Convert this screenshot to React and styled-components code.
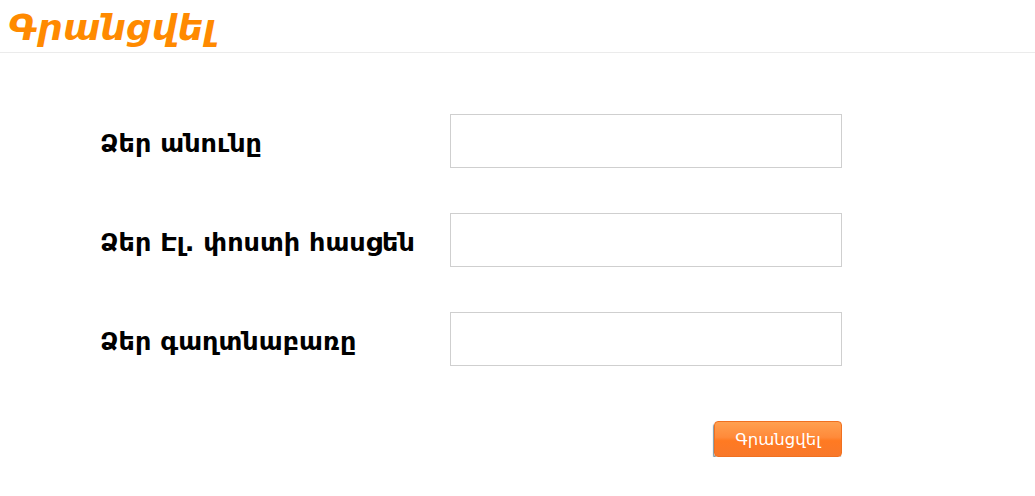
import styled, { createGlobalStyle } from "styled-components";

const GlobalStyle = createGlobalStyle`
  body {
    margin: 0;
    background: #fff;
    font-family: "DejaVu Sans", sans-serif;
  }
`;

const Header = styled.header`
  height: 52px;
  border-bottom: 1px solid #ebebeb;
  padding-left: 8px;
  display: flex;
  align-items: flex-end;
`;

const Title = styled.h1`
  margin: 0;
  font-size: 36px;
  font-weight: bold;
  font-style: italic;
  color: #ff8a00;
  line-height: 48px;
`;

const Form = styled.form`
  width: 742px;
  padding: 61px 0 0 100px;
  display: flex;
  flex-direction: column;
  gap: 45px;
`;

const Row = styled.div`
  display: flex;
  align-items: center;
`;

const Label = styled.label`
  width: 350px;
  font-size: 25.5px;
  font-weight: bold;
  color: #000;
  padding-top: 3px;
`;

const Input = styled.input`
  box-sizing: border-box;
  width: 392px;
  height: 54px;
  border: 1px solid #cfcfcf;
  outline: none;
  padding: 0 10px;
  font-size: 16px;
`;

const Actions = styled.div`
  display: flex;
  justify-content: flex-end;
  padding-top: 10px;
`;

const Button = styled.button`
  width: 128px;
  height: 36px;
  border: 1px solid #f07020;
  border-radius: 4px;
  background: linear-gradient(#ffa050, #ff8a3a 45%, #ff7a22 55%, #f8782a);
  box-shadow: -1px 2px 1px #7f9aa6;
  color: #fff;
  font-family: "DejaVu Sans", sans-serif;
  font-size: 16.5px;
  cursor: pointer;
`;

const fields = [
  { id: "name", label: "Ձեր անունը", type: "text" },
  { id: "email", label: "Ձեր Էլ. փոստի հասցեն", type: "email" },
  { id: "password", label: "Ձեր գաղտնաբառը", type: "password" },
];

const App = () => {
  return (
    <>
      <GlobalStyle />
      <Header>
        <Title>Գրանցվել</Title>
      </Header>
      <Form onSubmit={(e) => e.preventDefault()}>
        {fields.map((f) => (
          <Row key={f.id}>
            <Label htmlFor={f.id}>{f.label}</Label>
            <Input id={f.id} type={f.type} />
          </Row>
        ))}
        <Actions>
          <Button type="submit">Գրանցվել</Button>
        </Actions>
      </Form>
    </>
  );
};

export default App;
